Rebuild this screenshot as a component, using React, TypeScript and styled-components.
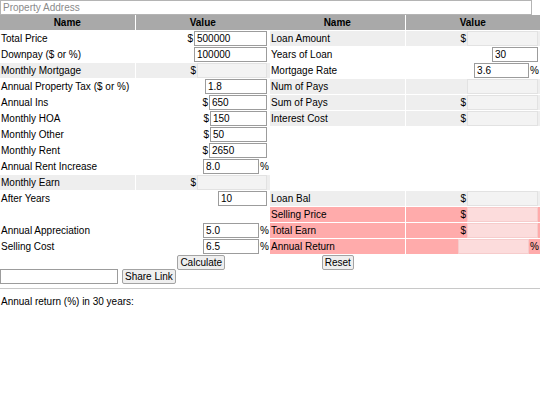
import React from "react";
import styled, { createGlobalStyle } from "styled-components";

type Tone = "plain" | "gray" | "red";

const GlobalStyle = createGlobalStyle`
  body {
    margin: 0;
    background: #fff;
    color: #000;
    font-family: "Liberation Sans", Arial, sans-serif;
    font-size: 10px;
  }
`;

const Page = styled.div`
  width: 540px;
`;

const AddressInput = styled.input`
  display: block;
  box-sizing: border-box;
  width: 532px;
  height: 15px;
  margin: 0;
  padding: 0 2px;
  border: 1px solid #b4b4b4;
  font: 10px "Liberation Sans", Arial, sans-serif;
  &::placeholder {
    color: #8a8a8a;
  }
`;

const Tables = styled.div`
  display: flex;
`;

const Panel = styled.div<{ $edge: number }>`
  width: 270px;
  display: flex;
  flex-direction: column;
  gap: 1px;
  --edge: ${(p) => p.$edge}px;
`;

const Row = styled.div`
  display: grid;
  grid-template-columns: 1fr 1fr;
  column-gap: 1px;
  height: 15px;
`;

const bg = { plain: "transparent", gray: "#eeeeee", red: "#ffabab" };
const fieldBg = { plain: "#fff", gray: "#f3f3f3", red: "#fcdcdc" };
const fieldBorder = { plain: "#9c9c9c", gray: "#e2e2e2", red: "#f6cccc" };

const HeadCell = styled.div`
  background: #a9a9a9;
  font-weight: bold;
  text-align: center;
  line-height: 15px;
`;

const NameCell = styled.div<{ $tone: Tone; $center?: boolean }>`
  background: ${(p) => bg[p.$tone]};
  padding-left: 1px;
  line-height: 14px;
  white-space: nowrap;
  display: flex;
  align-items: center;
  justify-content: ${(p) => (p.$center ? "center" : "flex-start")};
`;

const ValueCell = styled.div<{ $tone: Tone; $unit?: boolean; $center?: boolean }>`
  background: ${(p) => bg[p.$tone]};
  display: flex;
  align-items: center;
  justify-content: ${(p) => (p.$center ? "center" : "flex-end")};
  padding-right: ${(p) => (p.$unit ? "1px" : "var(--edge)")};
`;

const Prefix = styled.span`
  margin-right: 1px;
`;

const Suffix = styled.span`
  margin-left: 1px;
`;

const Field = styled.input<{ $w: number; $tone: Tone; $out?: boolean }>`
  box-sizing: border-box;
  width: ${(p) => p.$w}px;
  height: 15px;
  margin: 0;
  padding: 0 2px;
  border: 1px solid ${(p) => (p.$out ? fieldBorder[p.$tone] : fieldBorder.plain)};
  background: ${(p) => (p.$out ? fieldBg[p.$tone] : "#fff")};
  font: 10px "Liberation Sans", Arial, sans-serif;
  color: #000;
  outline: none;
`;

const Button = styled.button`
  box-sizing: border-box;
  height: 15px;
  margin: 0;
  padding: 0 2px;
  border: 1px solid #a3a3a3;
  border-radius: 2px;
  background: #efefef;
  font: 10px "Liberation Sans", Arial, sans-serif;
  color: #000;
  line-height: 13px;
`;

const ShareRow = styled.div`
  display: flex;
  gap: 4px;
  margin-top: -1px;
`;

const ShareInput = styled.input`
  box-sizing: border-box;
  width: 118px;
  height: 15px;
  margin: 0;
  padding: 0 2px;
  border: 1px solid #9c9c9c;
  font: 10px "Liberation Sans", Arial, sans-serif;
`;

const Rule = styled.hr`
  margin: 4px 0 0;
  border: none;
  border-top: 1px solid #c8c8c8;
`;

const Note = styled.p`
  margin: 7px 0 0 1px;
  line-height: 12px;
`;

type Item = {
  name?: string;
  tone?: Tone;
  value?: string;
  w?: number;
  dollar?: boolean;
  pct?: boolean;
  out?: boolean;
};

const left: Item[] = [
  { name: "Total Price", value: "500000", w: 73, dollar: true },
  { name: "Downpay ($ or %)", value: "100000", w: 73 },
  { name: "Monthly Mortgage", tone: "gray", w: 70, dollar: true, out: true },
  { name: "Annual Property Tax ($ or %)", value: "1.8", w: 62 },
  { name: "Annual Ins", value: "650", w: 58, dollar: true },
  { name: "Monthly HOA", value: "150", w: 57, dollar: true },
  { name: "Monthly Other", value: "50", w: 57, dollar: true },
  { name: "Monthly Rent", value: "2650", w: 58, dollar: true },
  { name: "Annual Rent Increase", value: "8.0", w: 56, pct: true },
  { name: "Monthly Earn", tone: "gray", w: 70, dollar: true, out: true },
  { name: "After Years", value: "10", w: 49 },
  {},
  { name: "Annual Appreciation", value: "5.0", w: 56, pct: true },
  { name: "Selling Cost", value: "6.5", w: 56, pct: true },
];

const right: Item[] = [
  { name: "Loan Amount", tone: "gray", w: 71, dollar: true, out: true },
  { name: "Years of Loan", value: "30", w: 46 },
  { name: "Mortgage Rate", value: "3.6", w: 55, pct: true },
  { name: "Num of Pays", tone: "gray", w: 71, out: true },
  { name: "Sum of Pays", tone: "gray", w: 71, dollar: true, out: true },
  { name: "Interest Cost", tone: "gray", w: 71, dollar: true, out: true },
  {},
  {},
  {},
  {},
  { name: "Loan Bal", tone: "gray", w: 71, dollar: true, out: true },
  { name: "Selling Price", tone: "red", w: 71, dollar: true, out: true },
  { name: "Total Earn", tone: "red", w: 71, dollar: true, out: true },
  { name: "Annual Return", tone: "red", w: 71, pct: true, out: true },
];

function DataRow({ item }: { item: Item }) {
  const tone = item.tone ?? "plain";
  if (!item.name) {
    return (
      <Row>
        <NameCell $tone="plain" />
        <ValueCell $tone="plain" />
      </Row>
    );
  }
  return (
    <Row>
      <NameCell $tone={tone}>{item.name}</NameCell>
      <ValueCell $tone={tone} $unit={item.pct}>
        {item.dollar && <Prefix>$</Prefix>}
        <Field
          $w={item.w ?? 60}
          $tone={tone}
          $out={item.out}
          readOnly={item.out}
          defaultValue={item.value ?? ""}
        />
        {item.pct && <Suffix>%</Suffix>}
      </ValueCell>
    </Row>
  );
}

function Header() {
  return (
    <Row>
      <HeadCell>Name</HeadCell>
      <HeadCell>Value</HeadCell>
    </Row>
  );
}

export default function App() {
  return (
    <Page>
      <GlobalStyle />
      <AddressInput placeholder="Property Address" />
      <Tables>
        <Panel $edge={3}>
          <Header />
          {left.map((item, i) => (
            <DataRow key={i} item={item} />
          ))}
          <Row>
            <NameCell $tone="plain" />
            <ValueCell $tone="plain" $center>
              <Button>Calculate</Button>
            </ValueCell>
          </Row>
        </Panel>
        <Panel $edge={2}>
          <Header />
          {right.map((item, i) => (
            <DataRow key={i} item={item} />
          ))}
          <Row>
            <NameCell $tone="plain" $center>
              <Button>Reset</Button>
            </NameCell>
            <ValueCell $tone="plain" />
          </Row>
        </Panel>
      </Tables>
      <ShareRow>
        <ShareInput />
        <Button>Share Link</Button>
      </ShareRow>
      <Rule />
      <Note>Annual return (%) in 30 years:</Note>
    </Page>
  );
}
